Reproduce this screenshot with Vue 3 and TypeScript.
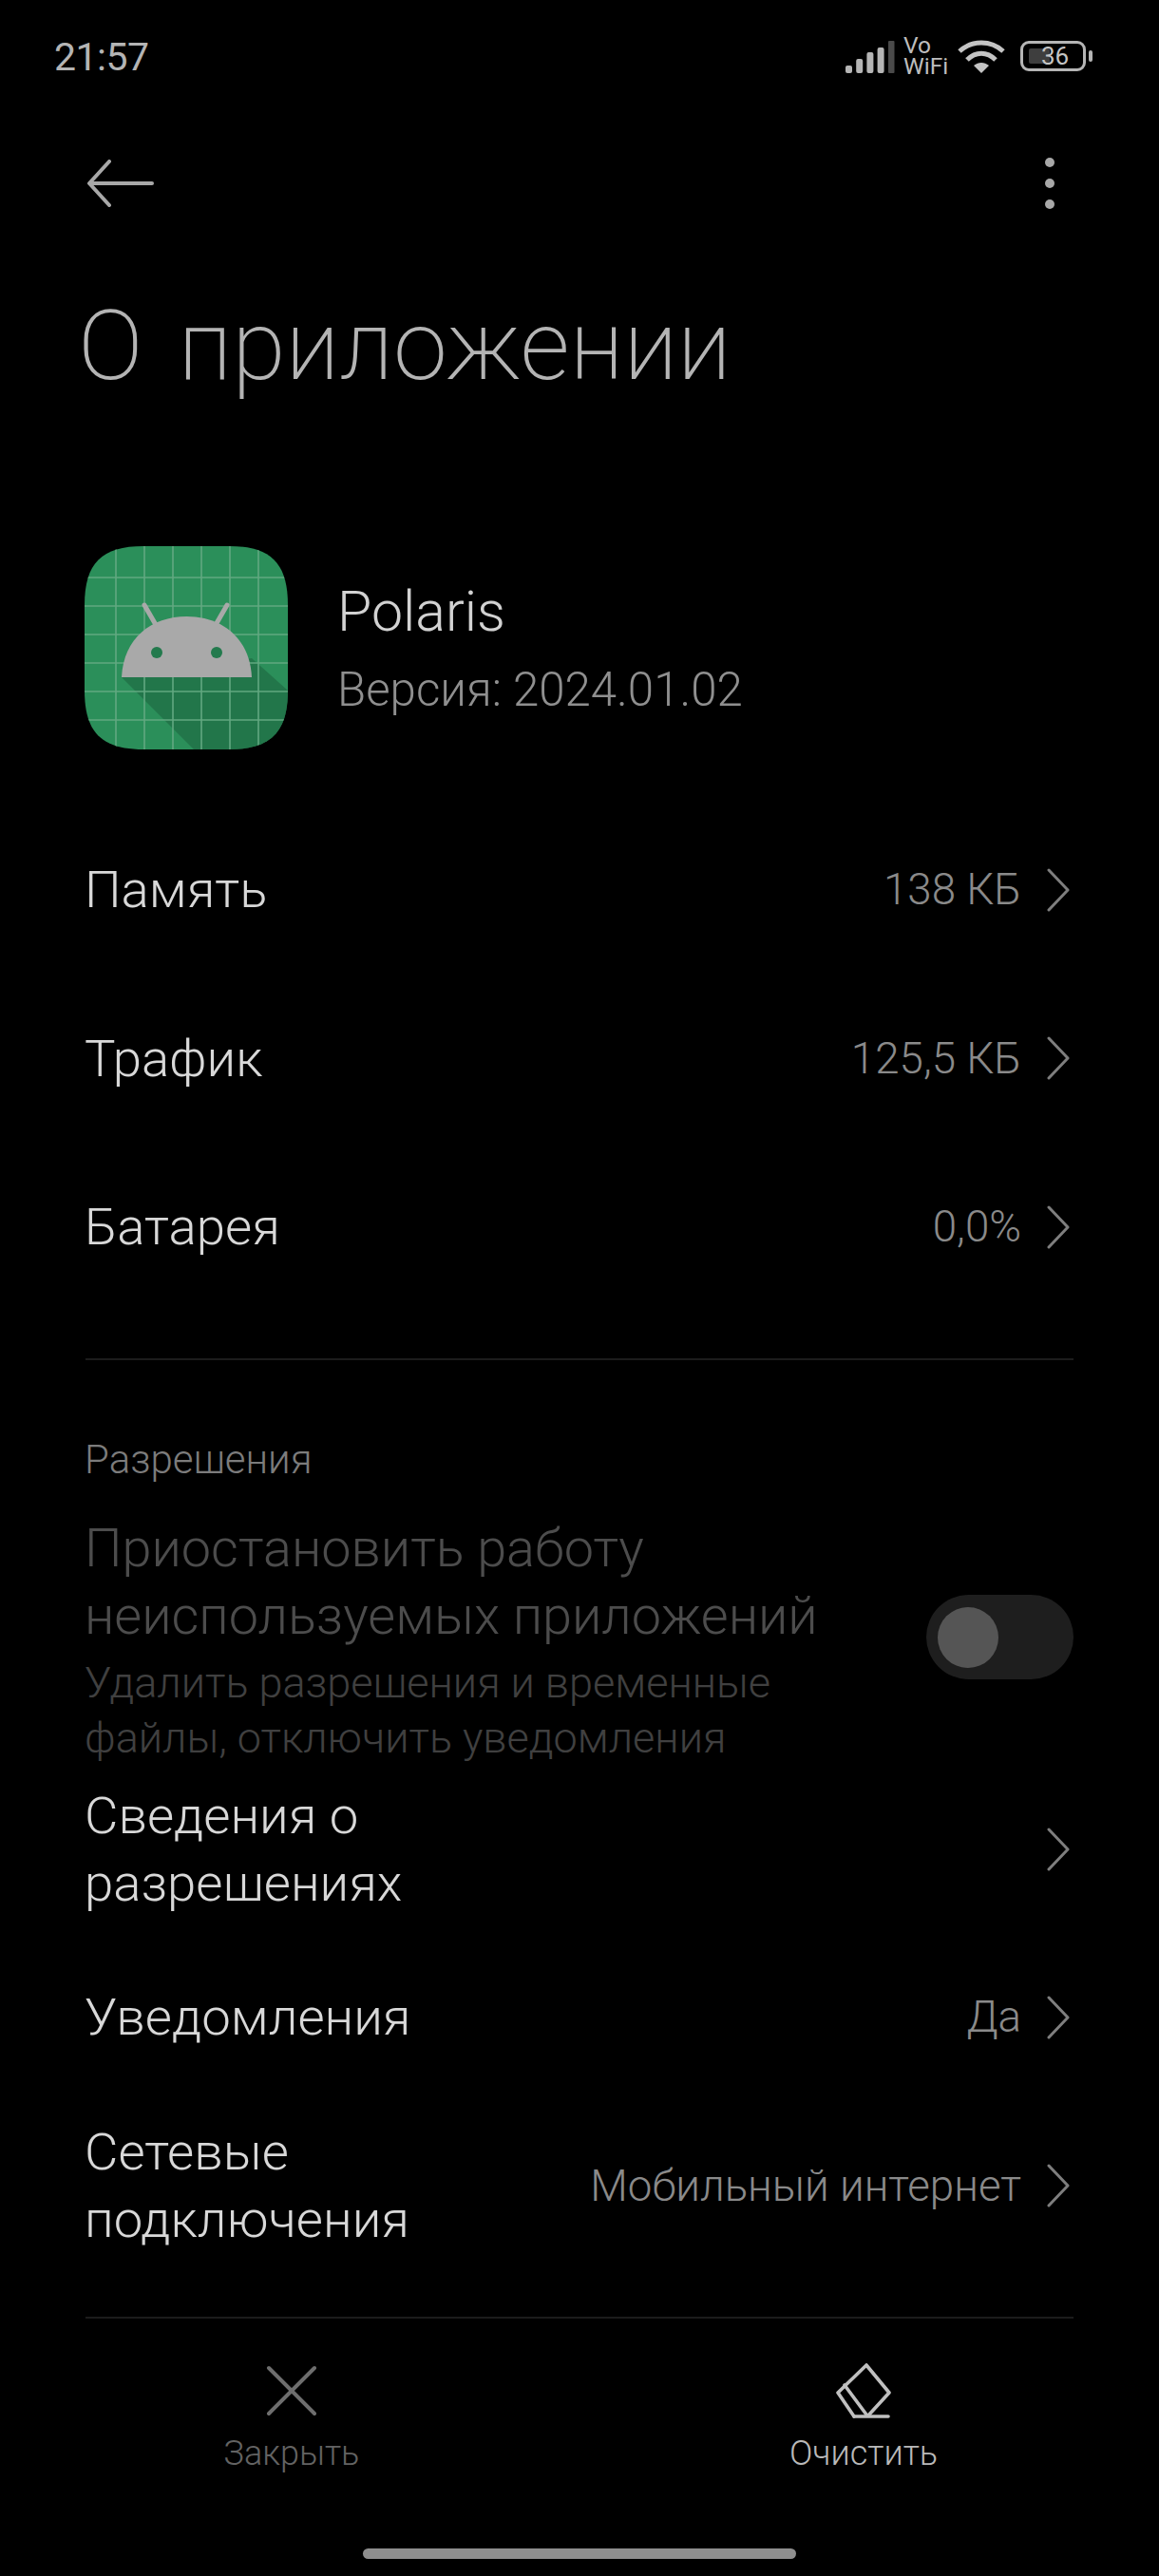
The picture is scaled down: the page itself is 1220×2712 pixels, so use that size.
<script setup lang="ts">
interface Row { label: string[]; value?: string; h: number }
const top: Row[] = [
  { label: ['Память'], value: '138 КБ', h: 177 },
  { label: ['Трафик'], value: '125,5 КБ', h: 178 },
  { label: ['Батарея'], value: '0,0%', h: 177 },
]
const bottom: Row[] = [
  { label: ['Сведения о', 'разрешениях'], h: 177 },
  { label: ['Уведомления'], value: 'Да', h: 177 },
  { label: ['Сетевые', 'подключения'], value: 'Мобильный интернет', h: 178 },
]
const bars = [
  { x: 0, h: 8 }, { x: 11.2, h: 15 }, { x: 22.4, h: 22 }, { x: 33.6, h: 27 },
]
const gridLines = [33, 63, 93, 123, 153, 183]
</script>

<template>
  <div class="screen">
    <div class="status">
      <span class="time">21:57</span>
      <div class="status-icons">
        <svg class="signal" width="52" height="34" viewBox="0 0 52 34">
          <rect v-for="b in bars" :key="b.x" :x="b.x" :y="34 - b.h" width="7" :height="b.h" rx="2" fill="#b5b5b5" />
          <rect x="45" y="0" width="6.5" height="34" rx="1" fill="#4a4a4a" />
        </svg>
        <div class="vowifi">Vo<br />WiFi</div>
        <svg class="wifi" width="50" height="36" viewBox="0 0 50 36" fill="none" stroke="#c4c4c4" stroke-width="5">
          <path d="M2 13 C15 1 35 1 48 13" />
          <path d="M10 22 C19 13 31 13 40 22" />
          <path d="M25 36 L17 28 C22 24 28 24 33 28 Z" fill="#c4c4c4" stroke="none" />
        </svg>
        <div class="battery">
          <div class="cell"><div class="charge"></div><span>36</span></div>
          <div class="nub"></div>
        </div>
      </div>
    </div>

    <div class="toolbar">
      <svg width="72" height="50" viewBox="0 0 72 50" fill="none" stroke="#a8a8a8" stroke-width="4" stroke-linecap="round" stroke-linejoin="round">
        <path d="M24 2 L3 25 L24 48" />
        <path d="M4 25 H69" />
      </svg>
      <div class="dots"><i></i><i></i><i></i></div>
    </div>

    <h1 class="title">О приложении</h1>

    <div class="app">
      <svg class="app-icon" width="214" height="214" viewBox="0 0 214 214">
        <defs>
          <clipPath id="sq"><path d="M62 0 H152 C196 0 214 18 214 62 V152 C214 196 196 214 152 214 H62 C18 214 0 196 0 152 V62 C0 18 18 0 62 0 Z" /></clipPath>
        </defs>
        <g clip-path="url(#sq)">
          <rect width="214" height="214" fill="#2b8f5a" />
          <path d="M39 138 L115 214 H214 V152 L176 118 Z" fill="#1f6b43" opacity="0.7" />
          <g stroke="#62a881" stroke-width="1.6">
            <line v-for="g in gridLines" :key="'v' + g" :x1="g" y1="0" :x2="g" y2="214" />
            <line v-for="g in gridLines" :key="'h' + g" x1="0" :y1="g" x2="214" :y2="g" />
          </g>
        </g>
        <path d="M63 62 L78 88 M150 62 L135 88" stroke="#a9a9a9" stroke-width="5" stroke-linecap="round" />
        <path d="M39 138 C41 97 70 74 107.5 74 C145 74 174 97 176 138 Z" fill="#a9a9a9" />
        <circle cx="76" cy="112" r="6" fill="#237a4d" />
        <circle cx="139" cy="112" r="6" fill="#237a4d" />
      </svg>
      <div class="app-text">
        <div class="app-name">Polaris</div>
        <div class="app-version">Версия: 2024.01.02</div>
      </div>
    </div>

    <div class="list top-list">
      <div v-for="r in top" :key="r.label[0]" class="row" :style="{ height: r.h + 'px' }">
        <div class="label"><div v-for="l in r.label" :key="l">{{ l }}</div></div>
        <div class="right">
          <span class="value">{{ r.value }}</span>
          <svg class="chev" width="26" height="46" viewBox="0 0 26 46" fill="none" stroke="#7e7e7e" stroke-width="3" stroke-linecap="round" stroke-linejoin="round"><path d="M3 2 L23 23 L3 44" /></svg>
        </div>
      </div>
    </div>

    <div class="divider first"></div>

    <div class="section">Разрешения</div>

    <div class="pause">
      <div class="pause-text">
        <div class="pause-title">Приостановить работу<br />неиспользуемых приложений</div>
        <div class="pause-sub">Удалить разрешения и временные<br />файлы, отключить уведомления</div>
      </div>
      <div class="toggle"><div class="knob"></div></div>
    </div>

    <div class="list bottom-list">
      <div v-for="r in bottom" :key="r.label[0]" class="row" :style="{ height: r.h + 'px' }">
        <div class="label"><div v-for="l in r.label" :key="l">{{ l }}</div></div>
        <div class="right">
          <span v-if="r.value" class="value">{{ r.value }}</span>
          <svg class="chev" width="26" height="46" viewBox="0 0 26 46" fill="none" stroke="#7e7e7e" stroke-width="3" stroke-linecap="round" stroke-linejoin="round"><path d="M3 2 L23 23 L3 44" /></svg>
        </div>
      </div>
    </div>

    <div class="divider last"></div>

    <div class="actions">
      <div class="action muted">
        <svg width="60" height="58" viewBox="0 0 60 58" fill="none" stroke="#6e6e6e" stroke-width="4" stroke-linecap="round"><path d="M6 5 L54 53 M54 5 L6 53" /></svg>
        <span>Закрыть</span>
      </div>
      <div class="action">
        <svg width="60" height="58" viewBox="0 0 60 58" fill="none" stroke="#c0c0c0" stroke-width="3.6" stroke-linejoin="round" stroke-linecap="round">
          <path d="M33 2 L57 31 L35 55 M20 56 L3 31 L33 2" />
          <path d="M10 23 L33 54" />
          <path d="M20 56 H56" />
        </svg>
        <span>Очистить</span>
      </div>
    </div>

    <div class="home"></div>
  </div>
</template>

<style>
html, body { background: #000; margin: 0; }
</style>

<style scoped>
.screen {
  width: 1220px;
  height: 2712px;
  background: #000;
  font-family: Roboto, "Noto Sans", sans-serif;
  color: #d6d6d6;
  overflow: hidden;
  display: flex;
  flex-direction: column;
  box-sizing: border-box;
}
.status {
  height: 118px;
  padding: 2px 70px 0 57px;
  display: flex;
  justify-content: space-between;
  align-items: center;
  box-sizing: border-box;
}
.time { font-size: 41px; font-weight: 400; color: #b4b4b4; letter-spacing: -0.5px; }
.status-icons { display: flex; align-items: center; margin-top: -2px; }
.signal { margin-right: 9px; margin-top: 2px; }
.vowifi { font-size: 24.5px; line-height: 22px; color: #bdbdbd; margin-right: 11px; width: 46px; white-space: nowrap; }
.wifi { margin-right: 16px; }
.battery { display: flex; align-items: center; gap: 3px; }
.cell {
  width: 63px; height: 26px; border: 3px solid #b5b5b5; border-radius: 9px;
  position: relative; display: flex; align-items: center; justify-content: center;
  font-size: 26px; color: #c4c4c4; box-sizing: content-box;
}
.cell span { position: relative; left: 2px; }
.charge { position: absolute; left: 6px; top: 5px; bottom: 5px; width: 22px; background: #3e3e3e; border-radius: 2px; }
.nub { width: 4px; height: 12px; background: #b5b5b5; border-radius: 2px; }
.toolbar {
  height: 150px;
  padding: 0 110px 0 91px;
  display: flex;
  justify-content: space-between;
  align-items: center;
  box-sizing: border-box;
}
.dots { display: flex; flex-direction: column; gap: 12px; }
.dots i { width: 10px; height: 10px; border-radius: 50%; background: #a8a8a8; display: block; }
.title {
  margin: 0;
  padding: 0 0 0 82px;
  height: 193px;
  font-size: 102.5px;
  line-height: 193px;
  font-weight: 200;
  word-spacing: 12px;
  color: #b4b4b4;
}
.app {
  margin-top: 114px;
  padding-left: 89px;
  display: flex;
  align-items: center;
  gap: 52px;
}
.app-name { font-size: 59px; line-height: 70px; color: #d2d2d2; font-weight: 300; margin-top: 6px; }
.app-version { font-size: 49.2px; line-height: 70px; margin-top: 12px; color: #8f8f8f; font-weight: 300; }
.top-list { margin-top: 59px; }
.list { padding: 0 90px 0 89px; }
.row { display: flex; justify-content: space-between; align-items: center; }
.label { font-size: 54.5px; line-height: 71px; color: #d8d8d8; font-weight: 340; }
.right { display: flex; align-items: center; gap: 26px; margin-right: 3px; }
.value { font-size: 45.7px; color: #8a8a8a; font-weight: 300; }
.divider { height: 2px; margin: 0 90px; background: #1c1c1c; }
.divider.first { margin-top: 50px; }
.section { margin-top: 80px; padding-left: 89px; font-size: 42px; line-height: 50px; color: #7c7c7c; font-weight: 300; }
.pause {
  margin-top: 33px;
  padding: 0 90px 0 89px;
  display: flex;
  justify-content: space-between;
  align-items: center;
}
.pause-title { font-size: 55.8px; line-height: 71px; color: #4c4c4c; font-weight: 300; white-space: nowrap; }
.pause-sub { font-size: 45px; line-height: 58px; color: #404040; font-weight: 300; margin-top: 6px; white-space: nowrap; }
.toggle { width: 155px; height: 89px; border-radius: 45px; background: #1e1e1e; position: relative; flex: none; margin-top: -7px; }
.knob { position: absolute; left: 12px; top: 13px; width: 64px; height: 64px; border-radius: 50%; background: #555; }
.bottom-list { margin-top: -1px; }
.divider.last { margin-top: 49px; }
.actions {
  display: grid;
  grid-template-columns: 602px 602px;
  padding: 47px 0 0 6px;
}
.action { display: flex; flex-direction: column; align-items: center; font-size: 36px; line-height: 48px; color: #b9b9b9; font-weight: 300; gap: 13px; }
.action.muted { color: #636363; }
.home { width: 456px; height: 11px; border-radius: 6px; background: #8e8e8e; margin: 76px auto 0; flex: none; }
</style>
